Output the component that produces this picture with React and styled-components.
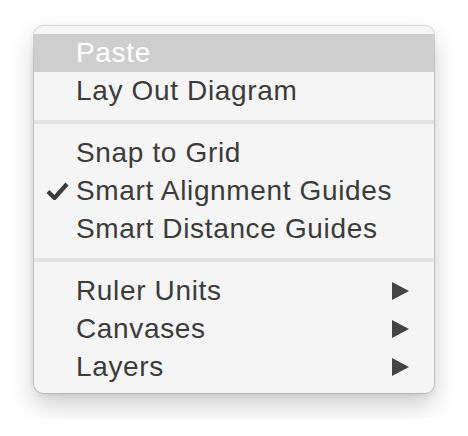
import React from 'react';
import styled, { createGlobalStyle } from 'styled-components';

const Global = createGlobalStyle`
  body {
    margin: 0;
    background: #ffffff;
    font-family: "Liberation Sans", Arial, sans-serif;
  }
`;

const Page = styled.div`
  padding: 26px 34px;
`;

const Menu = styled.div`
  width: 400px;
  box-sizing: border-box;
  background: #f5f5f5;
  border-radius: 9px;
  padding: 8px 0 7px;
  box-shadow: 0 0 0 1px rgba(0, 0, 0, 0.12), 0 12px 26px rgba(0, 0, 0, 0.2), 0 2px 6px rgba(0, 0, 0, 0.08);
`;

const Row = styled.div`
  display: flex;
  align-items: center;
  height: 38px;
  box-sizing: border-box;
  padding: 0 25px 0 0;
  background: ${p => (p.$active ? '#cecece' : 'transparent')};
  color: ${p => (p.$active ? '#ffffff' : '#3b3b3b')};
  font-size: 28px;
  line-height: 38px;
  letter-spacing: 0.65px;
`;

const Mark = styled.span`
  width: 42px;
  flex: none;
  display: flex;
  justify-content: flex-start;
  padding-left: 12px;
  box-sizing: border-box;
`;

const Label = styled.span`
  flex: 1;
  white-space: nowrap;
`;

const Separator = styled.div`
  height: 4px;
  background: #e3e3e3;
  margin: 10px 0;
`;

const Check = () => (
  <svg width="23" height="18" viewBox="0 0 23 18">
    <path d="M2 9.5 L8.5 16 L21 2" fill="none" stroke="#3b3b3b" strokeWidth="4.2" strokeLinejoin="miter" />
  </svg>
);

const Arrow = () => (
  <svg width="17" height="18" viewBox="0 0 17 18">
    <polygon points="0,0 17,9 0,18" fill="#444444" />
  </svg>
);

const groups = [
  [
    { label: 'Paste', active: true },
    { label: 'Lay Out Diagram' },
  ],
  [
    { label: 'Snap to Grid' },
    { label: 'Smart Alignment Guides', checked: true },
    { label: 'Smart Distance Guides' },
  ],
  [
    { label: 'Ruler Units', sub: true },
    { label: 'Canvases', sub: true },
    { label: 'Layers', sub: true },
  ],
];

export default function App() {
  return (
    <Page>
      <Global />
      <Menu>
        {groups.map((items, gi) => (
          <React.Fragment key={gi}>
            {gi > 0 && <Separator />}
            {items.map(item => (
              <Row key={item.label} $active={item.active}>
                <Mark>{item.checked && <Check />}</Mark>
                <Label>{item.label}</Label>
                {item.sub && <Arrow />}
              </Row>
            ))}
          </React.Fragment>
        ))}
      </Menu>
    </Page>
  );
}
